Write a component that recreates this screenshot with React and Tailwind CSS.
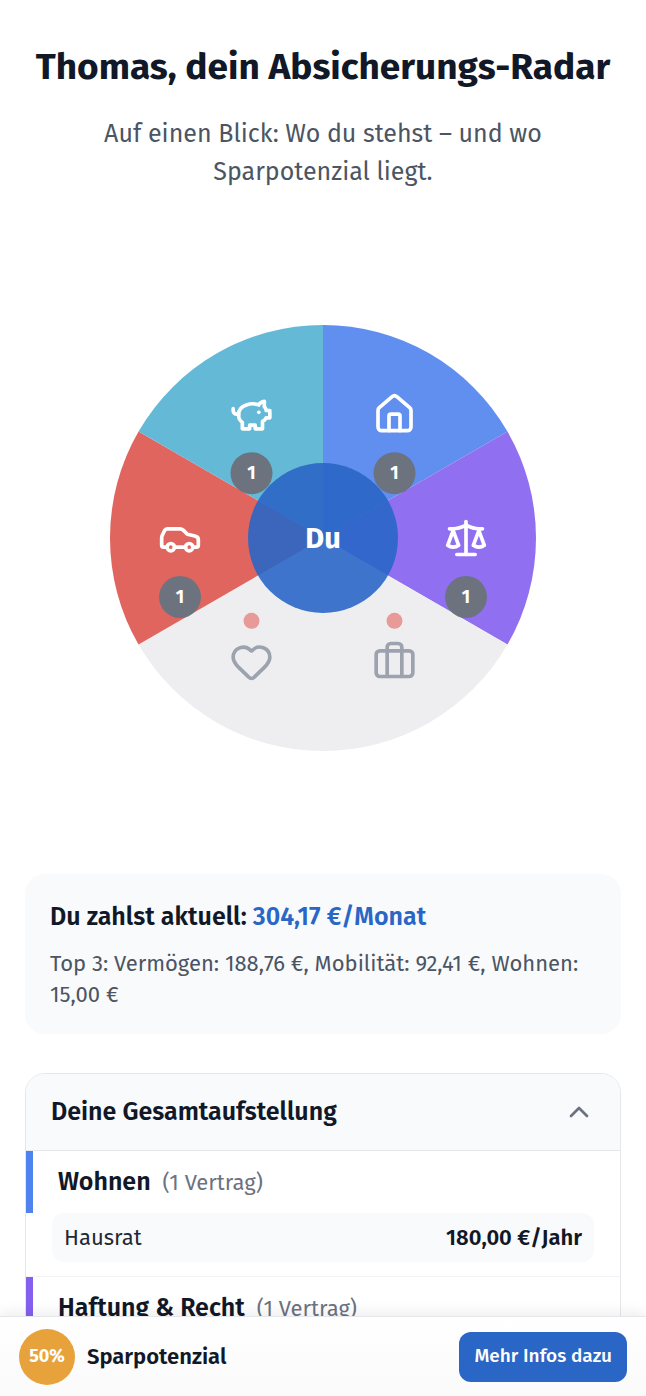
import { useState } from 'react';
import { Briefcase, Car, ChevronUp, Heart, House } from 'lucide-react';

function PiggyIcon(props) {
  return (
    <svg viewBox="0 0 24 24" fill="none" stroke="currentColor" strokeWidth="2" strokeLinecap="round" strokeLinejoin="round" {...props}>
      <path d="M19 5c-1.5 0-2.8 1.4-3 2-3.5-1.5-11-.3-11 5 0 1.8 0 3 2 4.5V20h4v-2h3v2h4v-4c1-.5 1.7-1 2-2h2v-4h-2c0-1-.5-1.5-1-2V5z" />
      <path d="M2 9v1c0 1.1.9 2 2 2h1" />
      <path d="M16 11h.01" />
    </svg>
  );
}

function ScaleIcon(props) {
  return (
    <svg viewBox="0 0 24 24" fill="none" stroke="currentColor" strokeWidth="2" strokeLinecap="round" strokeLinejoin="round" {...props}>
      <path d="m16 16 3-8 3 8c-.87.65-1.92 1-3 1s-2.13-.35-3-1Z" />
      <path d="m2 16 3-8 3 8c-.87.65-1.92 1-3 1s-2.13-.35-3-1Z" />
      <path d="M7 21h10" />
      <path d="M12 3v18" />
      <path d="M3 7h2c2 0 5-1 7-2 2 1 5 2 7 2h2" />
    </svg>
  );
}

const segments = [
  { id: 'wohnen', icon: House, color: '#608fef', count: 1 },
  { id: 'haftung', icon: ScaleIcon, color: '#9070f0', count: 1 },
  { id: 'reise', icon: Briefcase, color: '#eeeef0', count: 0 },
  { id: 'gesundheit', icon: Heart, color: '#eeeef0', count: 0 },
  { id: 'mobilitaet', icon: Car, color: '#e1655f', count: 1 },
  { id: 'vermoegen', icon: PiggyIcon, color: '#64bad6', count: 1 },
];

const groups = [
  { name: 'Wohnen', accent: 'border-[#4f83ee]', items: [{ label: 'Hausrat', price: '180,00 €/Jahr' }] },
  { name: 'Haftung & Recht', accent: 'border-[#8560ee]', items: [] },
];

const CENTER = 298;
const RADIUS = 213;
const ICON_RADIUS = 143;
const ICON_SIZE = 44;

function point(angle, radius) {
  const rad = ((angle - 90) * Math.PI) / 180;
  return [CENTER + radius * Math.cos(rad), CENTER + radius * Math.sin(rad)];
}

function slicePath(index) {
  const [x1, y1] = point(index * 60, RADIUS);
  const [x2, y2] = point(index * 60 + 60, RADIUS);
  return `M${CENTER} ${CENTER}L${x1} ${y1}A${RADIUS} ${RADIUS} 0 0 1 ${x2} ${y2}Z`;
}

function Radar() {
  return (
    <svg viewBox="0 0 596 596" className="block w-full" role="img" aria-label="Absicherungs-Radar">
      {segments.map((s, i) => (
        <path key={s.id} d={slicePath(i)} fill={s.color} />
      ))}
      {segments.map((s, i) => {
        const [x, y] = point(i * 60 + 30, ICON_RADIUS);
        const Icon = s.icon;
        return (
          <g key={s.id}>
            <Icon
              x={x - ICON_SIZE / 2}
              y={y - ICON_SIZE / 2}
              width={ICON_SIZE}
              height={ICON_SIZE}
              color={s.count ? '#ffffff' : '#9ca3af'}
            />
            {s.count > 0 ? (
              <>
                <circle cx={x} cy={y + 59} r="21" fill="#6c737f" />
                <text x={x} y={y + 65} textAnchor="middle" fill="#fff" className="text-[18px] font-bold">
                  {s.count}
                </text>
              </>
            ) : (
              <circle cx={x} cy={y - 41} r="8" fill="#e79a97" />
            )}
          </g>
        );
      })}
      <circle cx={CENTER} cy={CENTER} r="75" fill="#2a66c6" fillOpacity="0.9" />
      <text x={CENTER} y={CENTER + 10} textAnchor="middle" fill="#fff" className="text-[29px] font-bold">
        Du
      </text>
    </svg>
  );
}

export default function App() {
  const [open, setOpen] = useState(true);

  return (
    <div className="flex h-screen flex-col bg-white font-['Fira_Sans','Noto_Sans',sans-serif] lining-nums text-[#111827]">
      <main className="min-h-0 flex-1 overflow-y-auto px-[25px] pt-10 pb-10 [scrollbar-width:none]">
        <header className="text-center">
          <h1 className="text-[37px] leading-[54px] font-bold whitespace-nowrap">
            Thomas, dein Absicherungs-Radar
          </h1>
          <p className="mx-auto mt-[21px] max-w-[500px] text-[25px] leading-[38px] text-[#4b5563]">
            Auf einen Blick: Wo du stehst – und wo Sparpotenzial liegt.
          </p>
        </header>

        <section className="mt-[49px]">
          <Radar />
        </section>

        <section className="mt-[38px] rounded-[20px] bg-[#f9fafc] px-[25px] py-6">
          <h2 className="text-[25px] leading-[38px] font-semibold">
            Du zahlst aktuell: <span className="text-[#2a66c6]">304,17 €/Monat</span>
          </h2>
          <p className="mt-3 text-[22px] leading-[31px] text-[#4b5563]">
            Top 3: Vermögen: 188,76 €, Mobilität: 92,41 €, Wohnen: 15,00 €
          </p>
        </section>

        <section className="mt-[39px] overflow-hidden rounded-[20px] border border-[#e5e7eb]">
          <button
            type="button"
            aria-expanded={open}
            onClick={() => setOpen(!open)}
            className="flex h-[77px] w-full items-center justify-between border-b border-[#e5e7eb] bg-[#f9fafc] px-[25px]"
          >
            <span className="text-[25px] leading-[38px] font-semibold">Deine Gesamtaufstellung</span>
            <ChevronUp className={open ? 'size-8 text-[#6b7280]' : 'size-8 rotate-180 text-[#6b7280]'} />
          </button>
          {open &&
            groups.map((g) => (
              <div key={g.name} className="border-b border-[#f3f4f6] pb-[14px] last:border-b-0">
                <div className={`flex h-[62px] items-center gap-3 border-l-[7px] pl-[25px] ${g.accent}`}>
                  <h3 className="text-[25px] leading-[38px] font-semibold">{g.name}</h3>
                  <span className="text-[22px] leading-[31px] text-[#6b7280]">(1 Vertrag)</span>
                </div>
                {g.items.map((item) => (
                  <div
                    key={item.label}
                    className="mx-[26px] flex h-[49px] items-center justify-between rounded-xl bg-[#f9fafc] px-3 text-[22px] leading-[31px]"
                  >
                    <span className="text-[#1f2937]">{item.label}</span>
                    <span className="font-semibold">{item.price}</span>
                  </div>
                ))}
              </div>
            ))}
        </section>
      </main>

      <footer className="relative z-10 flex h-20 shrink-0 items-center justify-between border-t border-[#e5e7eb] bg-linear-to-b from-white to-[#fafafa] px-[19px] shadow-[0_-3px_13px_rgba(0,0,0,0.08)]">
        <div className="flex items-center gap-3">
          <div className="flex size-14 items-center justify-center rounded-full bg-[#e8a23c] text-[18px] font-bold text-white">
            50%
          </div>
          <span className="text-[22px] leading-[31px] font-semibold">Sparpotenzial</span>
        </div>
        <button type="button" className="h-[50px] rounded-xl bg-[#2a66c6] px-[15px] text-[19px] font-medium text-white">
          Mehr Infos dazu
        </button>
      </footer>
    </div>
  );
}
